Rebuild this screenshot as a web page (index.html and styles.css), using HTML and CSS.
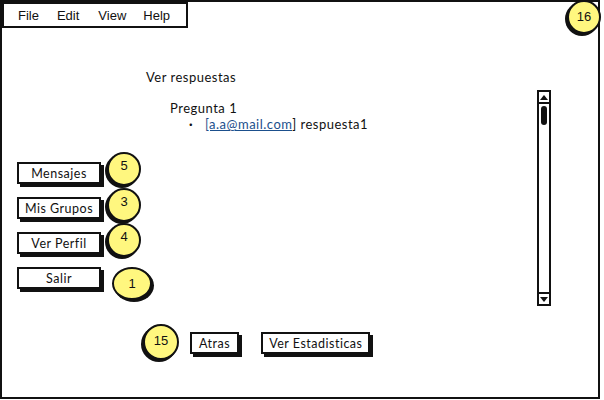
FILE: index.html
```html
<!DOCTYPE html>
<html>
<head>
<meta charset="utf-8">
<link rel="stylesheet" href="styles.css">
</head>
<body>
<div class="frame">
  <div class="menubar">
    <span>File</span><span>Edit</span><span>View</span><span>Help</span>
  </div>
  <div class="main">
    <div class="left">
      <div class="answers">
        <div class="title">Ver respuestas</div>
        <div class="question">
          <div>Pregunta 1</div>
          <div class="answer"><span class="dot">·</span><a class="link">[a.a@mail.com</a>] respuesta1</div>
        </div>
      </div>
      <div class="nav">
        <div class="btn nav-btn">Mensajes</div>
        <div class="btn nav-btn">Mis Grupos</div>
        <div class="btn nav-btn">Ver Perfil</div>
        <div class="btn nav-btn">Salir</div>
      </div>
    </div>
    <div class="scroll">
      <div class="arrow up"></div>
      <div class="track"><div class="thumb"></div></div>
      <div class="arrow down"></div>
    </div>
  </div>
  <div class="actions">
    <div class="btn">Atras</div>
    <div class="btn wide">Ver Estadisticas</div>
  </div>

  <div class="badge b16">16</div>
  <div class="badge b5">5</div>
  <div class="badge b3">3</div>
  <div class="badge b4">4</div>
  <div class="badge b1 right">1</div>
  <div class="badge b15">15</div>
</div>
</body>
</html>
```
FILE: styles.css
```css
html, body { margin: 0; padding: 0; background: #fff; }
body { font-family: "Lato", "Noto Sans", sans-serif; color: #111; }

.frame {
  position: relative;
  width: 600px;
  height: 399px;
  box-sizing: border-box;
  border: 2px solid #111;
  display: flex;
  flex-direction: column;
}

.menubar {
  width: 186px;
  height: 26px;
  box-sizing: border-box;
  border: 2px solid #111;
  display: flex;
  align-items: center;
  gap: 18px;
  padding-left: 14px;
  font-family: "Liberation Sans", Arial, sans-serif;
  font-size: 13px;
}
.menubar span:nth-child(3) { margin-left: 1px; }
.menubar span:nth-child(4) { margin-left: -1px; }

.main {
  display: flex;
  flex: none;
}
.left {
  flex: 1;
  display: flex;
  flex-direction: column;
}

.answers {
  margin-top: 41px;
  padding-left: 144px;
  font-size: 13px;
  line-height: 16px;
  letter-spacing: 0.5px;
}
.question { margin-top: 15px; padding-left: 24px; }
.answer { padding-left: 19px; }
.dot { display: inline-block; width: 16px; font-weight: bold; }
.link { color: #1b4f8c; text-decoration: underline; }

.nav {
  margin-top: 30px;
  padding-left: 15px;
  display: flex;
  flex-direction: column;
  gap: 13px;
}

.btn {
  box-sizing: border-box;
  height: 22px;
  border: 2px solid #111;
  background: #fff;
  box-shadow: 3px 3px 0 #111;
  font-size: 12.5px;
  letter-spacing: 0.5px;
  display: flex;
  align-items: center;
  justify-content: center;
  padding: 0 7px;
}
.btn.wide { padding: 0 6px; }
.nav-btn { width: 84px; padding: 0; }

.scroll {
  width: 14px;
  height: 216px;
  margin-top: 62px;
  margin-right: 47px;
  box-sizing: border-box;
  border: 2px solid #111;
  display: flex;
  flex-direction: column;
}
.arrow {
  height: 10px;
  flex: none;
  display: flex;
  align-items: center;
  justify-content: center;
}
.arrow.up { border-bottom: 2px solid #111; }
.arrow.down { border-top: 2px solid #111; }
.arrow::before {
  content: "";
  width: 0; height: 0;
  border-left: 4px solid transparent;
  border-right: 4px solid transparent;
}
.arrow.up::before { border-bottom: 5px solid #111; }
.arrow.down::before { border-top: 5px solid #111; }
.track { flex: 1; display: flex; justify-content: center; padding-top: 2px; }
.thumb { width: 6px; height: 19px; background: #111; border-radius: 3px; }

.actions {
  margin-top: 26px;
  padding-left: 188px;
  display: flex;
  gap: 22px;
}

.badge {
  position: absolute;
  width: 34px;
  height: 34px;
  box-sizing: border-box;
  border-radius: 50%;
  background: #fff77f;
  border: 2px solid #111;
  box-shadow: -2px 2px 0 #111;
  font-family: "Liberation Sans", Arial, sans-serif;
  font-size: 13px;
  text-align: center;
  line-height: 14px;
  padding-top: 5px;
}
.badge.right { box-shadow: 2px 2px 0 #111; }
.b16 { left: 565px; top: -2px; padding-top: 8px; }
.b5 { left: 105px; top: 150px; }
.b3 { left: 105px; top: 186px; }
.b4 { left: 105px; top: 221px; }
.b1 { left: 110px; top: 265px; width: 40px; height: 33px; padding-top: 8px; }
.b15 { left: 141px; top: 322px; width: 36px; height: 36px; padding-top: 8px; }
```
